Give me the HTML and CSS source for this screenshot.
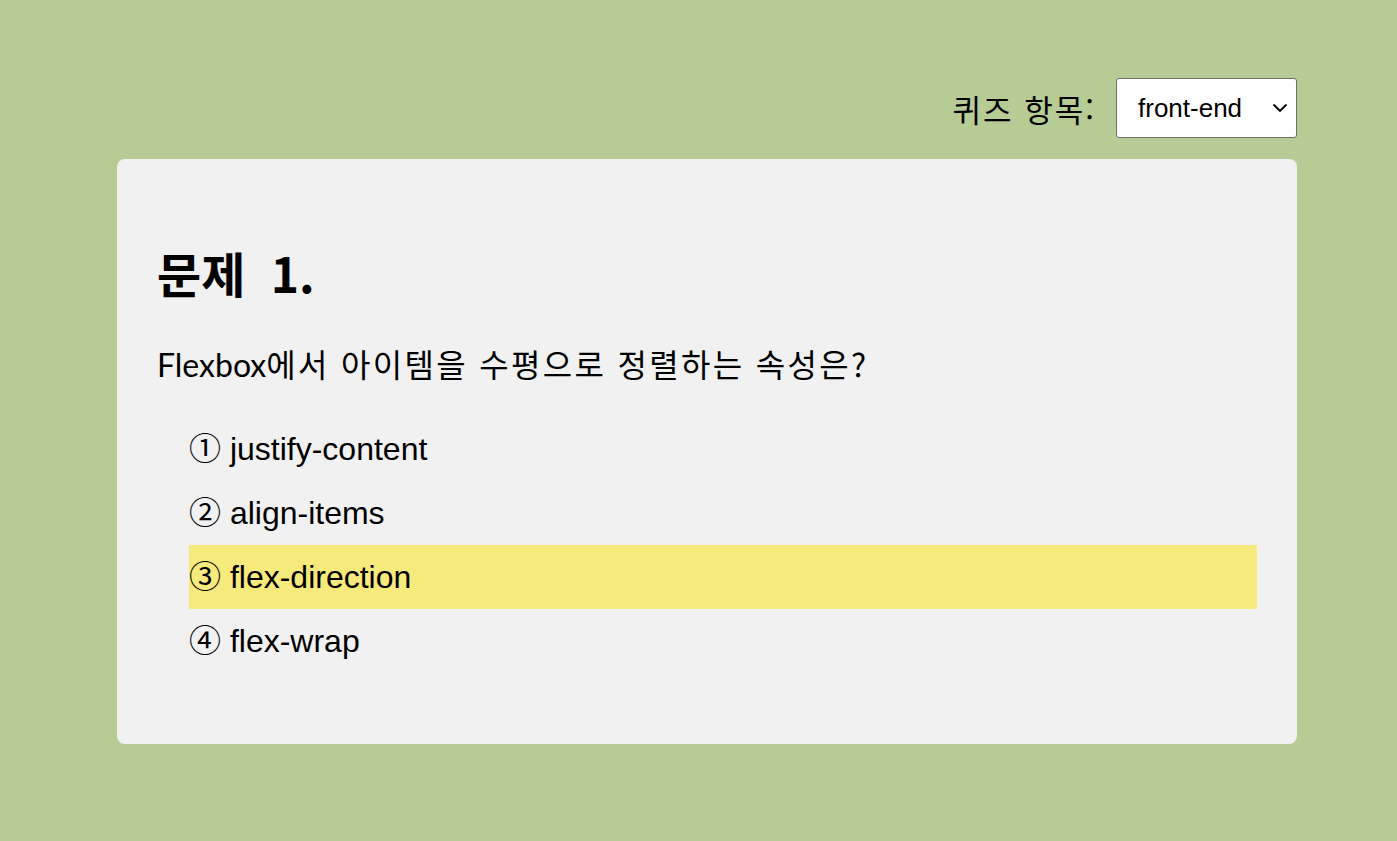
FILE: index.html
```html
<!DOCTYPE html>
<html lang="ko">
<head>
<meta charset="utf-8">
<title>퀴즈</title>
<link rel="stylesheet" href="styles.css">
</head>
<body>
<div class="wrap">
  <div class="toolbar">
    <label class="label" for="cat">퀴즈 항목:</label>
    <span class="select-box">
      <select id="cat" class="select">
        <option>front-end</option>
        <option>back-end</option>
      </select>
      <svg class="chev" width="16" height="10" viewBox="0 0 16 10"><path d="M1.5 1.5 L8 8 L14.5 1.5" fill="none" stroke="#000" stroke-width="1.8"/></svg>
    </span>
  </div>
  <div class="card">
    <h1 class="title">문제 1.</h1>
    <p class="question"><span class="latin">Flexbox</span>에서 아이템을 수평으로 정렬하는 속성은?</p>
    <ul class="options">
      <li class="opt">① justify-content</li>
      <li class="opt">② align-items</li>
      <li class="opt opt-active">③ flex-direction</li>
      <li class="opt">④ flex-wrap</li>
    </ul>
  </div>
</div>
</body>
</html>
```
FILE: styles.css
```css
html, body {
  margin: 0;
  padding: 0;
}
body {
  background: #b7cc94;
  font-family: "Noto Sans CJK KR", "Liberation Sans", sans-serif;
  color: #000;
}
.wrap {
  width: 1180px;
  margin-left: 117px;
  padding-top: 78px;
}
.toolbar {
  display: flex;
  justify-content: flex-end;
  align-items: center;
  gap: 20px;
  height: 60px;
  margin-bottom: 21px;
}
.label {
  font-size: 31px;
  line-height: 40px;
  letter-spacing: 2px;
  padding-top: 2px;
}
.select-box {
  position: relative;
  display: block;
}
.select {
  -webkit-appearance: none;
  appearance: none;
  display: block;
  width: 181px;
  height: 60px;
  box-sizing: border-box;
  padding: 0 0 0 21px;
  border: 1px solid #6f6f6f;
  border-radius: 3px;
  background: #fff;
  font-family: "Liberation Sans", Arial, sans-serif;
  font-size: 26px;
  color: #000;
}
.chev {
  position: absolute;
  right: 9px;
  top: 25px;
  pointer-events: none;
}
.card {
  background: #f1f1f1;
  border-radius: 8px;
  padding: 84px 40px 71px;
}
.title {
  margin: 0;
  font-size: 48px;
  line-height: 58px;
  font-weight: 700;
  word-spacing: 12px;
}
.question {
  margin: 40px 0 0;
  height: 44px;
  font-size: 32px;
  line-height: 44px;
  letter-spacing: 2.3px;
}
.latin {
  font-family: "Lato", "Noto Sans CJK KR", sans-serif;
  letter-spacing: 0;
  line-height: 32px;
}
.options {
  list-style: none;
  margin: 32px 0 0;
  padding: 0 0 0 32px;
}
.opt {
  height: 64px;
  line-height: 64px;
  font-family: "Liberation Sans", "Noto Sans CJK KR", Arial, sans-serif;
  font-size: 32px;
  white-space: nowrap;
}
.opt-active {
  background: #f6ea7d;
}
```
